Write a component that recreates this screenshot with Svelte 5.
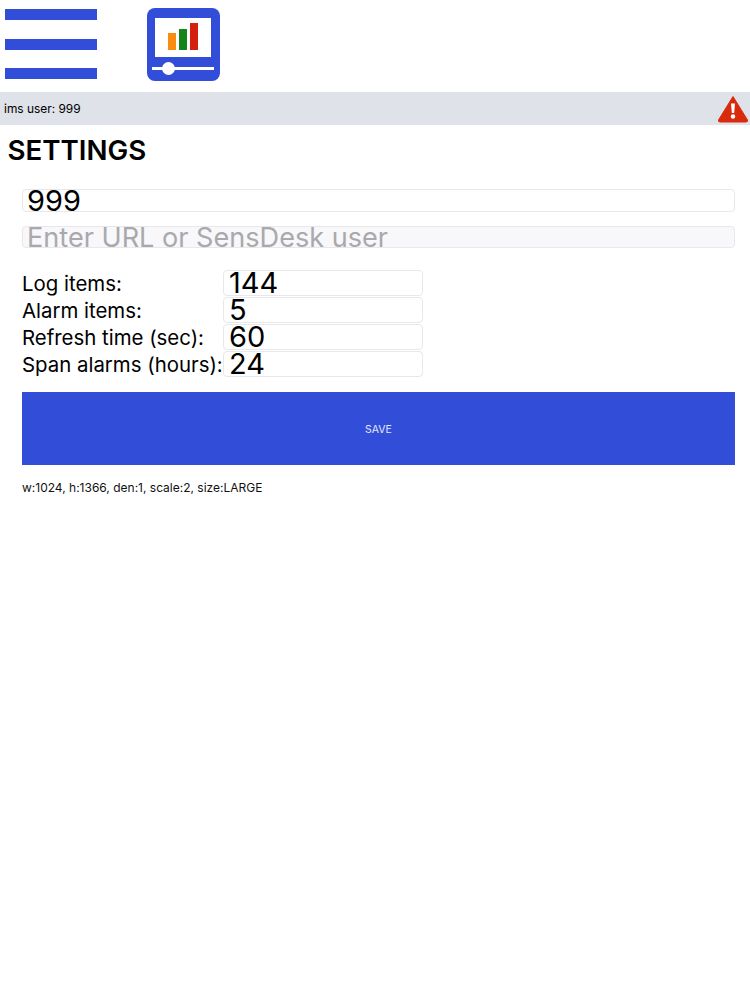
<script>
	const numberRows = [
		{ label: 'Log items:', value: '144' },
		{ label: 'Alarm items:', value: '5' },
		{ label: 'Refresh time (sec):', value: '60' },
		{ label: 'Span alarms (hours):', value: '24' }
	];
</script>

<div class="page">
	<header class="topbar">
		<div class="burger" aria-label="Menu">
			<span></span>
			<span></span>
			<span></span>
		</div>
		<svg class="logo" width="73" height="73" viewBox="0 0 73 73" aria-hidden="true">
			<rect width="73" height="73" rx="8" fill="#324dd8" />
			<rect x="8" y="10" width="56" height="39" fill="#fff" />
			<rect x="21" y="25" width="8" height="17" fill="#fb8c0f" />
			<rect x="32" y="21" width="8" height="21" fill="#15841a" />
			<rect x="43" y="15" width="8" height="27" fill="#d6200f" />
			<rect x="5" y="59" width="62" height="3" fill="#fff" />
			<circle cx="21.500" cy="60.500" r="6.500" fill="#fff" />
		</svg>
	</header>

	<div class="status">
		<span>ims user: 999</span>
		<svg class="warn" width="32" height="28" viewBox="0 0 32 28" aria-hidden="true">
			<path d="M16 1.500 L30.500 25 Q31 27 29 27 L3 27 Q1 27 1.500 25 Z" fill="#da2a0c" stroke="#da2a0c" stroke-linejoin="round" />
			<path d="M14 8.500 h4 l-0.800 9.500 h-2.400 Z" fill="#fff" />
			<circle cx="16" cy="21.500" r="2.200" fill="#fff" />
		</svg>
	</div>

	<h1>SETTINGS</h1>

	<div class="content">
		<div class="field wide">999</div>
		<div class="field wide second placeholder">Enter URL or SensDesk user</div>

		<div class="rows">
			{#each numberRows as row}
				<div class="row">
					<span class="label">{row.label}</span>
					<div class="field number">{row.value}</div>
				</div>
			{/each}
		</div>

		<button class="save" type="button">SAVE</button>

		<p class="info">w:1024, h:1366, den:1, scale:2, size:LARGE</p>
	</div>
</div>

<style>
	:global(body) {
		margin: 0;
		background: #fff;
	}

	.page {
		width: 750px;
		height: 1000px;
		overflow: hidden;
		font-family: Inter, 'Liberation Sans', sans-serif;
		color: #000;
	}

	.topbar {
		display: flex;
		align-items: flex-start;
		gap: 50px;
		height: 92px;
		padding-left: 5px;
		box-sizing: border-box;
	}

	.burger {
		display: flex;
		flex-direction: column;
		justify-content: space-between;
		width: 92px;
		height: 70px;
		margin-top: 9px;
	}

	.burger span {
		display: block;
		height: 11px;
		background: #324dd8;
	}

	.logo {
		display: block;
		margin-top: 7.500px;
	}

	.status {
		display: flex;
		align-items: center;
		justify-content: space-between;
		height: 33px;
		padding-left: 4px;
		padding-right: 1px;
		background: #dfe2e9;
		font-size: 11.900px;
	}

	.warn {
		margin-top: 1px;
	}

	h1 {
		margin: 7px 0 0 7.500px;
		height: 57px;
		font-size: 27.700px;
		line-height: 36px;
		font-weight: 600;
	}

	.content {
		padding: 0 15px 0 22px;
	}

	.field {
		box-sizing: border-box;
		border: 1px solid #e8e8ec;
		border-radius: 4px;
		padding-left: 4px;
		white-space: nowrap;
	}

	.wide {
		height: 23px;
		font-size: 29px;
		line-height: 21px;
	}

	.second {
		margin-top: 14px;
		height: 22px;
		background: #f8f7fa;
		font-size: 27.100px;
	}

	.placeholder {
		color: #a9a9ad;
	}

	.rows {
		display: flex;
		flex-direction: column;
		gap: 1px;
		margin-top: 22px;
	}

	.row {
		display: flex;
		align-items: center;
		height: 26px;
	}

	.label {
		width: 201px;
		font-size: 20.400px;
		white-space: nowrap;
	}

	.number {
		width: 200px;
		height: 26px;
		padding-left: 5px;
		font-size: 29px;
		line-height: 24px;
	}

	.save {
		display: block;
		width: 100%;
		height: 73px;
		margin-top: 15px;
		padding-top: 2px;
		border: none;
		background: #324dd8;
		color: #e4e8fb;
		font-family: inherit;
		font-size: 10.500px;
	}

	.info {
		margin: 15px 0 0;
		font-size: 12px;
		line-height: 15px;
		color: #111;
	}
</style>
